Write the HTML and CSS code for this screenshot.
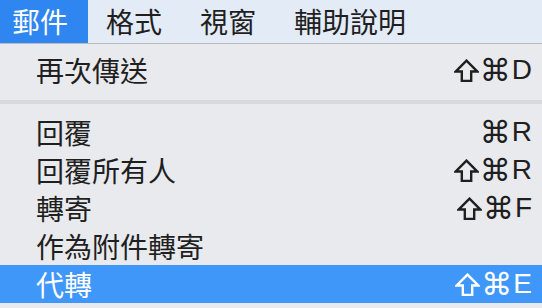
FILE: index.html
```html
<!DOCTYPE html>
<html lang="zh-Hant">
<head>
<meta charset="utf-8">
<title>郵件選單</title>
<link rel="stylesheet" href="styles.css">
</head>
<body>
<div class="menubar">
  <div class="mb-item first active">郵件</div>
  <div class="mb-item">格式</div>
  <div class="mb-item">視窗</div>
  <div class="mb-item">輔助說明</div>
</div>
<div class="menu">
  <div class="row">
    <span class="label">再次傳送</span>
    <span class="keys"><svg class="shift" viewBox="0 0 24 22"><path d="M12 1.5 L22.5 12 L16.5 12 L16.5 21 L7.5 21 L7.5 12 L1.5 12 Z"/></svg><span class="cmd">⌘</span><span class="key">D</span></span>
  </div>
  <div class="sep"></div>
  <div class="row">
    <span class="label">回覆</span>
    <span class="keys"><span class="cmd">⌘</span><span class="key">R</span></span>
  </div>
  <div class="row">
    <span class="label">回覆所有人</span>
    <span class="keys"><svg class="shift" viewBox="0 0 24 22"><path d="M12 1.5 L22.5 12 L16.5 12 L16.5 21 L7.5 21 L7.5 12 L1.5 12 Z"/></svg><span class="cmd">⌘</span><span class="key">R</span></span>
  </div>
  <div class="row">
    <span class="label">轉寄</span>
    <span class="keys"><svg class="shift" viewBox="0 0 24 22"><path d="M12 1.5 L22.5 12 L16.5 12 L16.5 21 L7.5 21 L7.5 12 L1.5 12 Z"/></svg><span class="cmd">⌘</span><span class="key">F</span></span>
  </div>
  <div class="row">
    <span class="label">作為附件轉寄</span>
  </div>
  <div class="row selected">
    <span class="label">代轉</span>
    <span class="keys"><svg class="shift" viewBox="0 0 24 22"><path d="M12 1.5 L22.5 12 L16.5 12 L16.5 21 L7.5 21 L7.5 12 L1.5 12 Z"/></svg><span class="cmd">⌘</span><span class="key">E</span></span>
  </div>
</div>
</body>
</html>
```
FILE: styles.css
```css
html, body {
  margin: 0;
  padding: 0;
}
body {
  width: 542px;
  height: 308px;
  overflow: hidden;
  background: #e9eaee;
  color: #1f1f1f;
  font-family: "Noto Sans CJK TC", "Noto Sans", sans-serif;
  font-size: 28px;
  font-weight: 400;
}
.menubar {
  display: flex;
  height: 43px;
  background: #e2ebf6;
  border-bottom: 1px solid #b7babf;
}
.mb-item {
  padding: 0 20px 0 18px;
  line-height: 43px;
  white-space: nowrap;
}
.mb-item.first {
  padding-left: 12px;
}
.mb-item.active {
  background: #2f86f1;
  color: #ffffff;
}
.menu {
  display: flex;
  flex-direction: column;
  padding-top: 7px;
}
.row {
  display: flex;
  align-items: center;
  justify-content: space-between;
  height: 38px;
  padding: 0 10px 0 36px;
}
.label {
  line-height: 38px;
  white-space: nowrap;
}
.row.selected {
  background: #4097fa;
  color: #ffffff;
}
.sep {
  height: 4px;
  background: #d8d9dd;
  margin: 11px 0 9px;
}
.keys {
  display: flex;
  align-items: center;
  gap: 2px;
}
.shift {
  width: 25px;
  height: 23px;
  fill: none;
  stroke: currentColor;
  stroke-width: 2.3;
  stroke-linejoin: miter;
}
.cmd {
  font-family: "DejaVu Sans", sans-serif;
  font-size: 31px;
  line-height: 38px;
  margin: 0 -1px;
}
.key {
  font-family: "Liberation Sans", sans-serif;
  font-size: 28px;
  line-height: 38px;
}
```
